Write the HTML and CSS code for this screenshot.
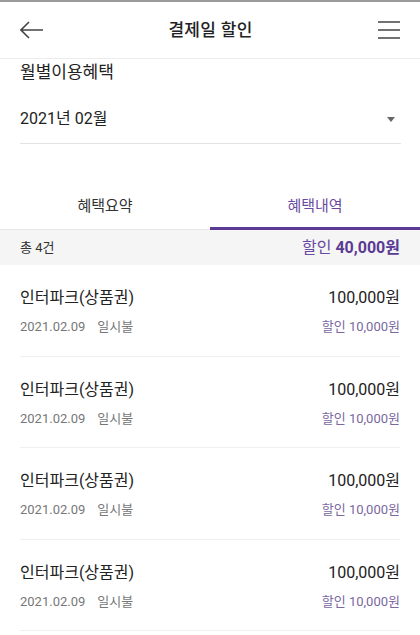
FILE: index.html
```html
<!DOCTYPE html>
<html lang="ko">
<head>
<meta charset="utf-8">
<link rel="stylesheet" href="styles.css">
</head>
<body>
<div class="app">
  <header class="header">
    <svg class="icon" width="24" height="18" viewBox="0 0 24 18"><path d="M23 9H1M9 1L1 9L9 17" fill="none" stroke="#444" stroke-width="1.6"/></svg>
    <h1 class="title">결제일 할인</h1>
    <svg class="icon" width="24" height="18" viewBox="0 0 24 18"><path d="M1 1H23M1 9H23M1 17H23" fill="none" stroke="#444" stroke-width="1.6"/></svg>
  </header>
  <section class="month">
    <div class="label">월별이용혜택</div>
    <div class="select">
      <span>2021년 02월</span>
      <span class="caret"></span>
    </div>
  </section>
  <nav class="tabs">
    <div class="tab">혜택요약</div>
    <div class="tab active">혜택내역</div>
  </nav>
  <div class="summary">
    <span class="count">총 4건</span>
    <span class="total">할인 <b>40,000원</b></span>
  </div>
  <ul class="list">
    <li class="item">
      <div class="row"><span class="name">인터파크(상품권)</span><span class="amount">100,000원</span></div>
      <div class="row sub"><span class="meta">2021.02.09<span class="gap"></span>일시불</span><span class="disc">할인 10,000원</span></div>
    </li>
    <li class="item">
      <div class="row"><span class="name">인터파크(상품권)</span><span class="amount">100,000원</span></div>
      <div class="row sub"><span class="meta">2021.02.09<span class="gap"></span>일시불</span><span class="disc">할인 10,000원</span></div>
    </li>
    <li class="item">
      <div class="row"><span class="name">인터파크(상품권)</span><span class="amount">100,000원</span></div>
      <div class="row sub"><span class="meta">2021.02.09<span class="gap"></span>일시불</span><span class="disc">할인 10,000원</span></div>
    </li>
    <li class="item">
      <div class="row"><span class="name">인터파크(상품권)</span><span class="amount">100,000원</span></div>
      <div class="row sub"><span class="meta">2021.02.09<span class="gap"></span>일시불</span><span class="disc">할인 10,000원</span></div>
    </li>
  </ul>
</div>
</body>
</html>
```
FILE: styles.css
```css
* { box-sizing: border-box; }
html, body { margin: 0; padding: 0; background: #fff; }
body {
  font-family: Roboto, "Noto Sans CJK KR", sans-serif;
  color: #222;
  width: 420px;
  height: 635px;
  overflow: hidden;
}
.app { border-top: 2px solid #9a9a9a; }
.header {
  height: 57px;
  display: flex;
  align-items: center;
  justify-content: space-between;
  padding: 0 19px 0 20px;
  border-bottom: 1px solid #ececec;
}
.icon { display: block; }
.title {
  margin: 0;
  font-size: 17px;
  line-height: 24px;
  font-weight: 500;
  color: #222;
  letter-spacing: 0.3px;
}
.month { padding: 0 19px 0 20px; }
.label {
  font-size: 17px;
  line-height: 24px;
  padding-top: 1px;
  color: #222;
}
.select {
  margin-top: 15px;
  height: 45px;
  display: flex;
  align-items: center;
  justify-content: space-between;
  font-size: 16px;
  line-height: 22px;
  padding-bottom: 4px;
  border-bottom: 1px solid #e3e3e3;
}
.caret {
  width: 0; height: 0;
  border-left: 4px solid transparent;
  border-right: 4px solid transparent;
  border-top: 5px solid #666;
  margin-right: 6px;
}
.tabs {
  margin-top: 40px;
  display: flex;
}
.tab {
  flex: 1;
  height: 46px;
  display: flex;
  align-items: center;
  justify-content: center;
  font-size: 15px;
  line-height: 20px;
  color: #333;
  border-bottom: 1px solid #e6e6e6;
  padding-bottom: 2px;
}
.tab.active {
  color: #6a4aa0;
  border-bottom: 3px solid #5b3a94;
  padding-bottom: 0;
}
.summary {
  height: 35px;
  background: #f5f5f5;
  display: flex;
  align-items: center;
  justify-content: space-between;
  padding: 0 20px;
  line-height: 20px;
}
.count { font-size: 13px; color: #333; }
.total { font-size: 16px; color: #6a4aa0; }
.total b { font-weight: 700; color: #5b3a94; }
.list { list-style: none; margin: 0; padding: 0 20px; }
.item {
  height: 91.5px;
  border-bottom: 1px solid #efefef;
  padding-top: 21px;
}
.row {
  display: flex;
  justify-content: space-between;
  align-items: center;
}
.name, .amount { font-size: 16px; color: #222; line-height: 24px; }
.sub { margin-top: 8px; line-height: 18px; }
.meta { font-size: 13px; color: #777; }
.gap { display: inline-block; width: 12px; }
.disc { font-size: 13px; color: #7a68a0; }
```
